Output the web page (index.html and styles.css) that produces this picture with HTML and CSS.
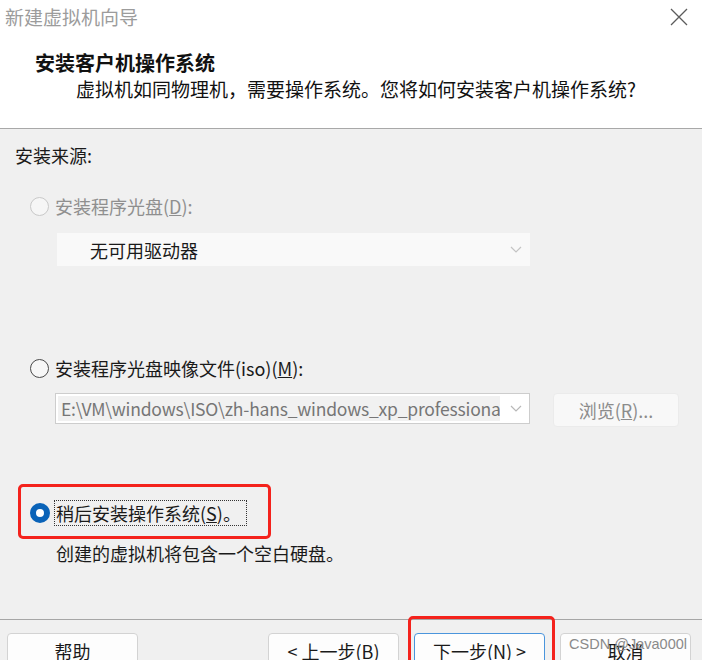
FILE: index.html
```html
<!DOCTYPE html>
<html lang="zh-CN">
<head>
    <meta charset="UTF-8">
    <title>新建虚拟机向导</title>
    <link rel="stylesheet" href="styles.css">
</head>
<body>
    <div class="wizard">
        <div class="titlebar">
            <span class="window-title">新建虚拟机向导</span>
            <svg class="close" width="20" height="20" viewBox="0 0 20 20">
                <path d="M2 2 L18 18 M18 2 L2 18" stroke="#5c5c5c" stroke-width="1.3" fill="none"/>
            </svg>
        </div>

        <div class="header">
            <h1>安装客户机操作系统</h1>
            <p>虚拟机如同物理机，需要操作系统。您将如何安装客户机操作系统?</p>
        </div>

        <div class="content">
            <div class="group-label">安装来源:</div>

            <div class="option disabled">
                <span class="radio"></span>
                <span class="option-text">安装程序光盘(<u>D</u>):</span>
            </div>
            <div class="combo combo-disabled">
                <span class="combo-text">无可用驱动器</span>
                <svg class="chevron" width="12" height="8" viewBox="0 0 12 8">
                    <path d="M1 1 L6 6 L11 1" stroke="#c4c4c4" stroke-width="1.2" fill="none"/>
                </svg>
            </div>

            <div class="option option-iso">
                <span class="radio"></span>
                <span class="option-text">安装程序光盘映像文件(iso)(<u>M</u>):</span>
            </div>
            <div class="iso-row">
                <div class="combo combo-iso">
                    <span class="combo-text">E:\VM\windows\ISO\zh-hans_windows_xp_professional_with_service_pack_3_x86_cd_x14-80404.iso</span>
                    <svg class="chevron" width="12" height="8" viewBox="0 0 12 8">
                        <path d="M1 1 L6 6 L11 1" stroke="#b8b8b8" stroke-width="1.2" fill="none"/>
                    </svg>
                </div>
                <div class="browse">浏览(<u>R</u>)...</div>
            </div>

            <div class="option option-later marked">
                <span class="radio checked"></span>
                <span class="option-text focus">稍后安装操作系统(<u>S</u>)。</span>
            </div>
            <div class="hint">创建的虚拟机将包含一个空白硬盘。</div>
        </div>

        <div class="footer">
            <button class="btn">帮助</button>
            <div class="btn-group">
                <button class="btn">&lt; 上一步(<u>B</u>)</button>
                <div class="marked marked-next">
                    <button class="btn btn-default">下一步(<u>N</u>) &gt;</button>
                </div>
                <div class="cancel-wrap">
                    <button class="btn">取消</button>
                    <span class="watermark">CSDN @Java000l</span>
                </div>
            </div>
        </div>
    </div>
</body>
</html>
```

FILE: styles.css
```css
* {
    box-sizing: border-box;
}
body {
    margin: 0;
    font-family: "Noto Sans CJK SC", "Microsoft YaHei", sans-serif;
    font-size: 18px;
    color: #1a1a1a;
    background-color: #f0f0f0;
}
.wizard {
    width: 702px;
    height: 660px;
    overflow: hidden;
    background-color: #f0f0f0;
}
.titlebar {
    height: 33px;
    display: flex;
    align-items: center;
    justify-content: space-between;
    padding: 0 13px 0 5px;
    background-color: white;
}
.window-title {
    font-size: 19px;
    line-height: 26px;
    color: #9c9c9c;
}
.header {
    height: 96px;
    background-color: white;
    padding: 17px 0 0 35px;
    border-bottom: 1px solid #a8a8a8;
}
.header h1 {
    margin: 0;
    font-size: 20px;
    line-height: 26px;
    font-weight: bold;
    color: #111;
}
.header p {
    margin: 0 0 0 41px;
    font-size: 19px;
    line-height: 26px;
    color: #111;
}
.content {
    height: 490px;
    padding: 13px 0 0 15px;
}
.group-label {
    line-height: 26px;
}
.option {
    display: flex;
    align-items: center;
    width: fit-content;
    line-height: 26px;
    margin: 25px 0 0 15px;
}
.option-text {
    margin-left: 6px;
}
.option.disabled .option-text {
    color: #8f8f8f;
}
.option-iso {
    margin-top: 89px;
}
.option-later {
    margin-top: 73px;
}
.radio {
    width: 19px;
    height: 19px;
    border-radius: 50%;
    border: 1.5px solid #4a4a4a;
    background-color: #f7f7f7;
}
.option.disabled .radio {
    border: 1px solid #c9c9c9;
    background-color: #f6f6f6;
}
.radio.checked {
    border: 6px solid #0a63b8;
    background-color: white;
    width: 20px;
    height: 20px;
}
.focus {
    border: 1px dotted #333;
    padding: 0 5px 0 1px;
    margin-left: 4px;
    line-height: 24px;
}
.combo {
    display: flex;
    align-items: center;
    justify-content: space-between;
}
.combo-disabled {
    width: 473px;
    height: 33px;
    margin: 14px 0 0 42px;
    padding: 0 8px 0 33px;
    background-color: #f9f9f9;
}
.iso-row {
    display: flex;
    align-items: flex-start;
    margin: 12px 0 0 40px;
}
.combo-iso {
    width: 475px;
    height: 31px;
    padding: 2px 7px 2px 2px;
    background-color: white;
    border: 1px solid #cdcdcd;
}
.combo-iso .combo-text {
    width: 442px;
    height: 25px;
    line-height: 25px;
    padding-left: 3px;
    overflow: hidden;
    white-space: nowrap;
    font-size: 17.5px;
    letter-spacing: -0.2px;
    color: #767676;
    background-color: #f1f1f1;
}
.browse {
    width: 126px;
    height: 34px;
    margin-left: 23px;
    line-height: 32px;
    text-align: center;
    color: #8c8c8c;
    background-color: #f8f8f8;
    border: 1px solid #ebebeb;
    border-radius: 4px;
}
.hint {
    margin: 14px 0 0 41px;
    line-height: 26px;
}
.marked {
    position: relative;
}
.marked::after {
    content: "";
    position: absolute;
    top: -16px;
    left: -12px;
    right: -24px;
    bottom: -13px;
    border: 3.5px solid #f4221c;
    border-radius: 5px;
    pointer-events: none;
}
.footer {
    display: flex;
    justify-content: space-between;
    padding: 13px 11px 0 7px;
    border-top: 1px solid #a6a6a6;
}
.btn-group {
    display: flex;
    gap: 15px;
}
.btn {
    width: 131px;
    height: 36px;
    padding: 0;
    font-family: inherit;
    font-size: 18px;
    line-height: 26px;
    color: #1a1a1a;
    background-color: #fdfdfd;
    border: 1px solid #d3d3d3;
    border-radius: 4px;
}
.btn-default {
    border-color: #4a95dc;
}
.marked-next::after {
    top: -17px;
    left: -6px;
    right: -10px;
    bottom: -30px;
}
.cancel-wrap {
    position: relative;
}
.watermark {
    position: absolute;
    top: 3px;
    right: 4px;
    font-family: "Liberation Sans", Arial, sans-serif;
    font-size: 14.5px;
    color: #8a8a8a;
    white-space: nowrap;
}
```
